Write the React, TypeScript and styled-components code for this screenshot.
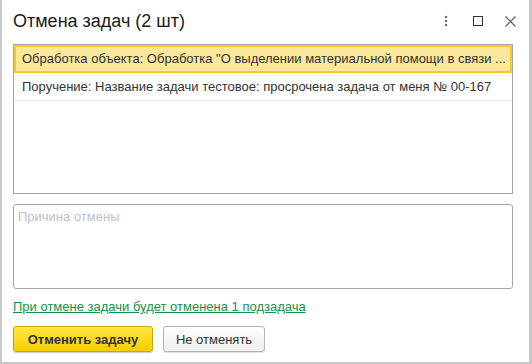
import React from 'react';
import styled, { createGlobalStyle } from 'styled-components';

const GlobalStyle = createGlobalStyle`
  html, body {
    margin: 0;
    padding: 0;
    background: #ffffff;
  }
  body {
    font-family: 'Liberation Sans', Arial, sans-serif;
    font-size: 13px;
    color: #333;
  }
`;

const tasks = [
  'Обработка объекта: Обработка "О выделении материальной помощи в связи ...',
  'Поручение: Название задачи тестовое: просрочена задача от меня № 00-167',
];

const App: React.FC = () => {
  return (
    <>
      <GlobalStyle />
      <Window>
        <Header>
          <Title>Отмена задач (2 шт)</Title>
          <HeaderTools>
            <ToolButton aria-label="Ещё">
              <svg width="4" height="12" viewBox="0 0 4 12">
                <circle cx="2" cy="2" r="1.3" fill="#6f6f6f" />
                <circle cx="2" cy="6" r="1.3" fill="#6f6f6f" />
                <circle cx="2" cy="10" r="1.3" fill="#6f6f6f" />
              </svg>
            </ToolButton>
            <ToolButton aria-label="Развернуть">
              <svg width="10" height="10" viewBox="0 0 10 10">
                <rect x="0.5" y="0.5" width="9" height="9" fill="none" stroke="#333" strokeWidth="1" />
              </svg>
            </ToolButton>
            <ToolButton aria-label="Закрыть">
              <svg width="11" height="11" viewBox="0 0 11 11">
                <path d="M0.5 0.5 L10.5 10.5 M10.5 0.5 L0.5 10.5" stroke="#555" strokeWidth="1.1" />
              </svg>
            </ToolButton>
          </HeaderTools>
        </Header>

        <Body>
          <TaskList>
            {tasks.map((t, i) => (
              <TaskRow key={i} selected={i === 0}>
                {t}
              </TaskRow>
            ))}
          </TaskList>

          <ReasonInput placeholder="Причина отмены" />

          <SubtaskLink href="#">При отмене задачи будет отменена 1 подзадача</SubtaskLink>

          <ButtonBar>
            <PrimaryButton>Отменить задачу</PrimaryButton>
            <SecondaryButton>Не отменять</SecondaryButton>
          </ButtonBar>
        </Body>
      </Window>
    </>
  );
};

export default App;

const Window = styled.div`
  box-sizing: border-box;
  width: 532px;
  height: 364px;
  background: #fff;
  border-left: 2px solid #c8c8c8;
  border-right: 3px solid #c8c8c8;
  border-bottom: 2px solid #c8c8c8;
  display: flex;
  flex-direction: column;
`;

const Header = styled.div`
  display: flex;
  align-items: center;
  justify-content: space-between;
  height: 42px;
  padding: 0 8px 0 11px;
`;

const Title = styled.div`
  font-size: 18px;
  color: #1a1a1a;
  padding-top: 1px;
`;

const HeaderTools = styled.div`
  display: flex;
  align-items: center;
  gap: 10px;
`;

const ToolButton = styled.div`
  width: 22px;
  height: 22px;
  display: flex;
  align-items: center;
  justify-content: center;
`;

const Body = styled.div`
  display: flex;
  flex-direction: column;
  padding: 2px 16px 0 11px;
`;

const TaskList = styled.div`
  box-sizing: border-box;
  height: 150px;
  border: 1px solid #a5a5a5;
  display: flex;
  flex-direction: column;
`;

const TaskRow = styled.div<{ selected?: boolean }>`
  box-sizing: border-box;
  height: 28px;
  line-height: ${({ selected }) => (selected ? '24px' : '27px')};
  padding: 0 ${({ selected }) => (selected ? '6px' : '8px')};
  white-space: nowrap;
  overflow: hidden;
  color: #333;
  background: ${({ selected }) => (selected ? '#fbe89a' : '#fff')};
  border: ${({ selected }) => (selected ? '2px solid #f7cb27' : 'none')};
  border-bottom: ${({ selected }) => (selected ? '2px solid #f7cb27' : '1px solid #e4e4e4')};
`;

const ReasonInput = styled.textarea`
  box-sizing: border-box;
  margin-top: 10px;
  height: 85px;
  resize: none;
  border: 1px solid #a5a5a5;
  border-radius: 3px;
  padding: 4px 4px;
  font-family: 'Liberation Sans', Arial, sans-serif;
  font-size: 13px;
  color: #333;
  outline: none;
  &::placeholder {
    color: #c0c0c6;
  }
`;

const SubtaskLink = styled.a`
  margin-top: 10px;
  align-self: flex-start;
  color: #12924c;
  text-decoration: underline;
  font-size: 13px;
  line-height: 16px;
`;

const ButtonBar = styled.div`
  display: flex;
  gap: 10px;
  margin-top: 11px;
`;

const BaseButton = styled.button`
  box-sizing: border-box;
  height: 26px;
  border-radius: 3px;
  font-family: 'Liberation Sans', Arial, sans-serif;
  font-size: 13px;
  cursor: pointer;
  padding: 0;
  white-space: nowrap;
`;

const PrimaryButton = styled(BaseButton)`
  width: 140px;
  font-weight: bold;
  color: #333;
  background: linear-gradient(#ffe743, #f5cf00);
  border: 1px solid #c8a800;
  box-shadow: 0 1px 1px rgba(0, 0, 0, 0.2);
`;

const SecondaryButton = styled(BaseButton)`
  width: 102px;
  color: #333;
  background: linear-gradient(#ffffff, #eeeeee);
  border: 1px solid #b5b5b5;
  box-shadow: 0 1px 1px rgba(0, 0, 0, 0.12);
`;
